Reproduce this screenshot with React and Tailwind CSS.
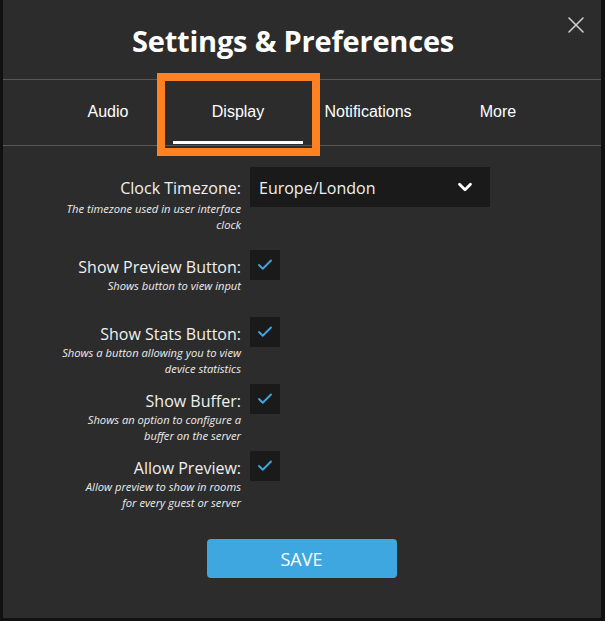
import React, { useState } from 'react';
import { Check, ChevronDown, X } from 'lucide-react';

const tabs = ['Audio', 'Display', 'Notifications', 'More'];

const options = [
  { key: 'preview', label: 'Show Preview Button:', desc: ['Shows button to view input'] },
  { key: 'stats', label: 'Show Stats Button:', desc: ['Shows a button allowing you to view', 'device statistics'] },
  { key: 'buffer', label: 'Show Buffer:', desc: ['Shows an option to configure a', 'buffer on the server'] },
  { key: 'allow', label: 'Allow Preview:', desc: ['Allow preview to show in rooms', 'for every guest or server'] },
];

function Desc({ lines }) {
  return (
    <div className="text-[11.2px] italic leading-[16px] text-[#ececec]">
      {lines.map((l) => (
        <div key={l}>{l}</div>
      ))}
    </div>
  );
}

export default function App() {
  const [tab, setTab] = useState('Display');
  const [checks, setChecks] = useState({ preview: true, stats: true, buffer: true, allow: true });

  return (
    <div className="min-h-screen bg-[#111111] pl-[3px] pr-[4px] pb-[3px]" style={{ fontFamily: '"Open Sans", "Noto Sans", sans-serif' }}>
      <div className="relative w-[598px] h-[618px] bg-[#2c2c2c] text-white">
        {/* Header */}
        <div className="relative h-[80px] flex items-center justify-center pr-[18px] border-b border-[#585858]">
          <h1 className="text-[29px] font-bold tracking-[-0.2px] pt-[2px]">Settings &amp; Preferences</h1>
          <button className="absolute right-[11px] top-[11px] text-[#cfcfcf]">
            <X size={28} strokeWidth={1.3} />
          </button>
        </div>

        {/* Tabs */}
        <div className="flex pl-[40px] h-[66px] border-b border-[#585858]" style={{ fontFamily: '"Liberation Sans", Arial, sans-serif' }}>
          {tabs.map((t) => (
            <button key={t} onClick={() => setTab(t)} className="w-[130px] h-full flex flex-col text-[16px] text-white">
              <span className="flex-1 flex items-center justify-center pt-[3px]">{t}</span>
              <span className={`h-[3px] mb-[1px] w-full ${tab === t ? 'bg-white' : 'bg-transparent'}`} />
            </button>
          ))}
        </div>

        {/* highlight annotation */}
        <div className="absolute left-[154px] top-[73px] w-[163px] h-[83px] border-[8px] border-[#ff8121] pointer-events-none" />

        {/* Form */}
        <div className="pt-[21px]">
          <div className="flex h-[83px]">
            <div className="w-[238px] text-right">
              <div className="text-[16px] leading-[40px] text-[#f0f0f0] pt-[1px]">Clock Timezone:</div>
              <div className="-mt-[7px]">
                <Desc lines={['The timezone used in user interface', 'clock']} />
              </div>
            </div>
            <div className="ml-[9px] w-[240px] h-[40px] bg-[#1a1a1a] flex items-center justify-between pl-[9px] pr-[14px]">
              <span className="text-[16px] text-[#f0f0f0] pt-[2px]">Europe/London</span>
              <ChevronDown size={22} strokeWidth={3} className="text-white" />
            </div>
          </div>

          {options.map((o) => (
            <div key={o.key} className="flex h-[67px]">
              <div className="w-[238px] text-right">
                <div className="text-[16px] leading-[30px] text-[#f0f0f0] pt-[2px]">{o.label}</div>
                <div className="-mt-[4px]">
                  <Desc lines={o.desc} />
                </div>
              </div>
              <button
                onClick={() => setChecks({ ...checks, [o.key]: !checks[o.key] })}
                className="ml-[9px] w-[30px] h-[30px] bg-[#1a1a1a] flex items-center justify-center"
              >
                {checks[o.key] && <Check size={18} strokeWidth={2.5} className="text-[#3ea6e0]" />}
              </button>
            </div>
          ))}

          <div className="flex justify-center pt-[21px] pr-[1px]">
            <button className="w-[190px] h-[39px] rounded-[4px] bg-[#3fa7e0] text-[18px] text-white pt-[2px]">SAVE</button>
          </div>
        </div>
      </div>
    </div>
  );
}
